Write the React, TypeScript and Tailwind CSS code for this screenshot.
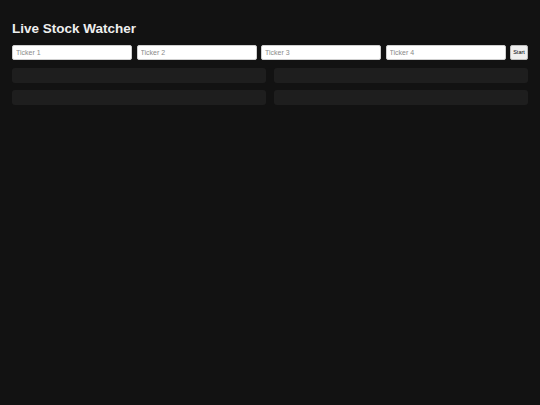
import React from 'react';

const tickers = ['Ticker 1', 'Ticker 2', 'Ticker 3', 'Ticker 4'];

export default function App() {
  return (
    <div className="min-h-[405px] w-full bg-[#121212] px-3 pt-[20px] font-['Liberation_Sans',Arial,sans-serif] text-[#eeeeee]">
      <h1 className="text-[13.5px] font-bold leading-[17px]">Live Stock Watcher</h1>

      {/* ticker inputs */}
      <div className="mt-[8px] flex items-center gap-[4.5px]">
        {tickers.map((t) => (
          <input
            key={t}
            placeholder={t}
            className="h-[15px] min-w-0 flex-1 rounded-[2px] border border-[#cfcfcf] bg-white px-[3px] text-[7px] text-black placeholder:text-[#8a8a8a] outline-none"
          />
        ))}
        <button className="h-[15px] w-[18px] shrink-0 rounded-[2px] border border-[#bdbdbd] bg-[#efefef] text-[5.5px] font-medium text-black">
          Start
        </button>
      </div>

      {/* quote cards */}
      <div className="mt-[8px] grid grid-cols-2 gap-x-[8px] gap-y-[7px]">
        {tickers.map((t) => (
          <div key={t} className="h-[15px] rounded-[3px] bg-[#1e1e1e]" />
        ))}
      </div>
    </div>
  );
}
